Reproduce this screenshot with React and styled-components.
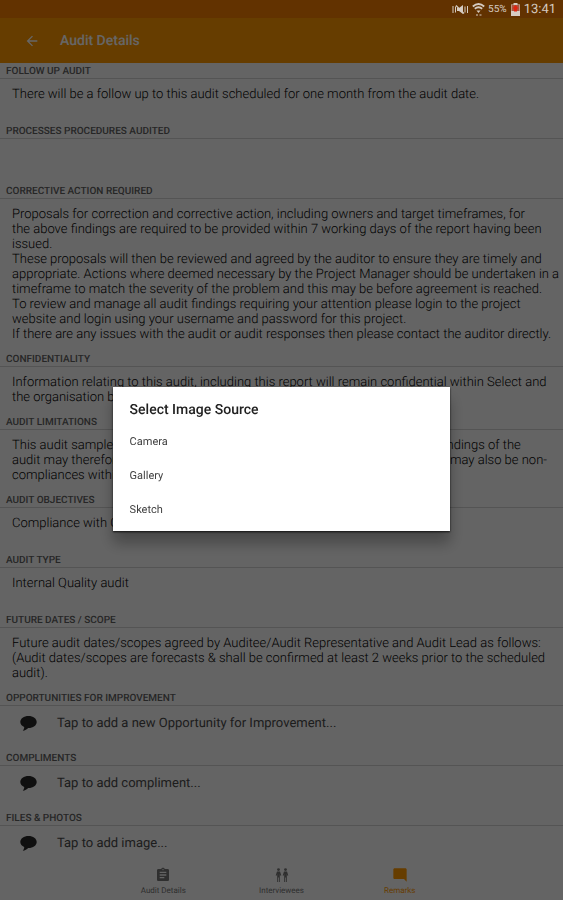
import { useState } from "react";
import styled, { createGlobalStyle } from "styled-components";
import {
  MdArrowBack,
  MdAssignment,
  MdModeComment,
} from "react-icons/md";

const GlobalStyle = createGlobalStyle`
  * {
    box-sizing: border-box;
  }
  body {
    margin: 0;
    font-family: Roboto, "Liberation Sans", sans-serif;
    text-rendering: geometricPrecision;
    background-color: #fafafa;
  }
  button {
    font-family: inherit;
    text-rendering: inherit;
    border: none;
    background: none;
    padding: 0;
    cursor: pointer;
  }
`;

const AppScreen = styled.div`
  display: flex;
  flex-direction: column;
  height: 100vh;
  overflow: hidden;
`;

const StatusBar = styled.div`
  position: relative;
  z-index: 3;
  display: flex;
  flex: none;
  align-items: center;
  justify-content: flex-end;
  gap: 3px;
  height: 18px;
  padding: 0 7px;
  background-color: #623200;
  color: #d6ccc2;
  font-size: 10px;
  .clock {
    font-size: 13px;
  }
  svg {
    display: block;
  }
`;

const AppHeader = styled.header`
  display: flex;
  flex: none;
  align-items: center;
  gap: 20px;
  height: 45px;
  padding: 0 24px;
  background-color: #ff9800;
  color: #ffffff;
  h1 {
    margin: 0;
    font-size: 14px;
    font-weight: 500;
  }
  button {
    display: flex;
    color: inherit;
  }
`;

const AppMain = styled.main`
  flex: 1;
  min-height: 0;
  overflow: hidden;
`;

const Section = styled.section`
  display: flex;
  flex-direction: column;
  min-height: 60px;
`;

const SectionTitle = styled.h2`
  margin: 0;
  padding: 2px 6px 0;
  border-bottom: 1px solid #d2d2d2;
  color: #606060;
  font-size: 10px;
  font-weight: 500;
  line-height: 13px;
  text-transform: uppercase;
`;

const SectionText = styled.p`
  margin: 0;
  padding: 8px 0 9px 12px;
  color: #000000;
  font-size: 13px;
  font-weight: 300;
  line-height: 15px;
  white-space: pre-line;
`;

const AddRow = styled.button`
  display: flex;
  align-items: center;
  gap: 20px;
  padding: 9px 20px;
  color: #4a4a4a;
  font-size: 13px;
  font-weight: 400;
  line-height: 18px;
  text-align: left;
`;

const BottomNav = styled.nav`
  display: flex;
  flex: none;
  justify-content: center;
  height: 37px;
  background-color: #fafafa;
`;

const NavItem = styled.button`
  display: flex;
  flex-direction: column;
  align-items: center;
  gap: 3px;
  width: 21%;
  padding-top: 4px;
  color: ${({ $active }) => ($active ? "#ff9800" : "#757575")};
  font-size: 8px;
  line-height: 10px;
`;

const Scrim = styled.div`
  position: fixed;
  inset: 0;
  z-index: 2;
  display: flex;
  align-items: center;
  justify-content: center;
  padding-top: 18px;
  background-color: rgba(0, 0, 0, 0.6);
`;

const Dialog = styled.div`
  width: 60%;
  padding: 15px 0 4px;
  background-color: #ffffff;
  box-shadow: 0 1px 2px rgba(0, 0, 0, 0.8), 0 12px 14px rgba(0, 0, 0, 0.3);
  h2 {
    margin: 0 0 6px;
    padding: 0 17px;
    color: #212121;
    font-size: 14px;
    font-weight: 500;
    line-height: 17px;
  }
`;

const DialogOption = styled.button`
  display: block;
  width: 100%;
  padding: 0 17px;
  color: #424242;
  font-size: 11px;
  line-height: 34px;
  text-align: left;
`;

const sections = [
  {
    title: "Follow up audit",
    text: "There will be a follow up to this audit scheduled for one month from the audit date.",
  },
  { title: "Processes procedures audited", text: "" },
  {
    title: "Corrective action required",
    text: `Proposals for correction and corrective action, including owners and target timeframes, for
      the above findings are required to be provided within 7 working days of the report having been
      issued.
      These proposals will then be reviewed and agreed by the auditor to ensure they are timely and
      appropriate. Actions where deemed necessary by the Project Manager should be undertaken in a
      timeframe to match the severity of the problem and this may be before agreement is reached.
      To review and manage all audit findings requiring your attention please login to the project
      website and login using your username and password for this project.
      If there are any issues with the audit or audit responses then please contact the auditor directly.`,
  },
  {
    title: "Confidentiality",
    text: `Information relating to this audit, including this report will remain confidential within Select and
      the organisation being audited.`,
  },
  {
    title: "Audit limitations",
    text: `This audit sampled a selection of the activities and records only, and so the findings of the
      audit may therefore not be a full account of all of the issues presented. There may also be non-
      compliances within areas not sampled.`,
  },
  { title: "Audit objectives", text: "Compliance with Quality procedures" },
  { title: "Audit type", text: "Internal Quality audit" },
  {
    title: "Future dates / scope",
    text: `Future audit dates/scopes agreed by Auditee/Audit Representative and Audit Lead as follows:
      (Audit dates/scopes are forecasts & shall be confirmed at least 2 weeks prior to the scheduled
      audit).`,
  },
];

const addSections = [
  {
    title: "Opportunities for improvement",
    text: "Tap to add a new Opportunity for Improvement...",
  },
  { title: "Compliments", text: "Tap to add compliment..." },
  { title: "Files & photos", text: "Tap to add image..." },
];

const CommentIcon = () => (
  <svg width="17" height="16" viewBox="0 0 17 16" aria-hidden="true">
    <path
      d="M8.500 0C3.900 0 .3 2.600.3 6c0 2.200 1.500 4 3.900 5 .1 1.500-.5 2.800-1.500 3.700 2.300-.2 4.200-1.300 5.400-2.700h.4c4.600 0 8.200-2.600 8.200-6S13.100 0 8.500 0z"
      fill="#2a2a2a"
    />
  </svg>
);

const PeopleIcon = () => (
  <svg width="14" height="16" viewBox="0 0 14 16" fill="currentColor" aria-hidden="true">
    <circle cx="3.500" cy="2.600" r="1.400" />
    <path d="M2 4.500h3l1.300 4-.9.300L4.800 7v8h-.9v-4.500h-.8V15h-.9V7l-.6 1.800-.9-.3z" />
    <circle cx="10.500" cy="2.600" r="1.400" />
    <path d="M9 4.500h3l1.300 4-.9.300-.6-1.800v8h-.9v-4.500h-.8V15h-.9V7l-.6 1.800-.9-.3z" />
  </svg>
);

const MutedIcon = () => (
  <svg width="17" height="11" viewBox="0 0 17 11" fill="none" stroke="currentColor" aria-hidden="true">
    <path d="M1 2v7M3.500 2.500v6M13 2.500v6M15.500 2v7" />
    <path d="M5 4h2l4-3v9L7 7H5z" fill="currentColor" stroke="none" />
    <path d="M4 1.500l8 8" strokeWidth="1.200" />
  </svg>
);

const WifiIcon = () => (
  <svg width="13" height="13" viewBox="0 0 13 13" fill="none" stroke="currentColor" aria-hidden="true">
    <path d="M.8 3.500c3.500-3 7.900-3 11.400 0M2.800 5.800c2.300-1.900 5.100-1.900 7.400 0" strokeWidth="1.800" />
    <path d="M4.500 7.500h4l-2 2.500z" fill="currentColor" stroke="none" />
    <path d="M4 12h2M7.500 12h2" />
  </svg>
);

const BatteryIcon = () => (
  <svg width="11" height="13" viewBox="0 0 11 13" aria-hidden="true">
    <path d="M3.500 0h4v1.500H10V13H1V1.500h2.500z" fill="#d6ccc2" />
    <path d="M1.500 2h8v6h-8z" fill="#a9553f" />
    <path d="M5.500 2l3 3.500H7v3H4v-3H2.500z" fill="#e02410" />
  </svg>
);

const navItems = [
  { title: "Audit Details", icon: <MdAssignment size={16} /> },
  { title: "Interviewees", icon: <PeopleIcon /> },
  { title: "Remarks", icon: <MdModeComment size={16} /> },
];

const AuditDetails = () => {
  const [active, setActive] = useState("Remarks");
  const [modal, setModal] = useState(true);
  const toggleModal = () => setModal(!modal);

  return (
    <AppScreen>
      <GlobalStyle />
      <StatusBar>
        <MutedIcon />
        <WifiIcon />
        <span>55%</span>
        <BatteryIcon />
        <span className="clock">13:41</span>
      </StatusBar>
      <AppHeader>
        <button type="button" aria-label="Back">
          <MdArrowBack size={16} />
        </button>
        <h1>Audit Details</h1>
      </AppHeader>
      <AppMain>
        {sections.map((item) => (
          <Section key={item.title}>
            <SectionTitle>{item.title}</SectionTitle>
            <SectionText>{item.text}</SectionText>
          </Section>
        ))}
        {addSections.map((item) => (
          <Section key={item.title}>
            <SectionTitle>{item.title}</SectionTitle>
            <AddRow type="button" onClick={toggleModal}>
              <CommentIcon />
              {item.text}
            </AddRow>
          </Section>
        ))}
      </AppMain>
      <BottomNav>
        {navItems.map((item) => (
          <NavItem
            type="button"
            key={item.title}
            $active={active === item.title}
            onClick={() => setActive(item.title)}
          >
            {item.icon}
            {item.title}
          </NavItem>
        ))}
      </BottomNav>
      {modal ? (
        <Scrim onClick={toggleModal}>
          <Dialog role="dialog" aria-labelledby="source-title">
            <h2 id="source-title">Select Image Source</h2>
            <DialogOption type="button">Camera</DialogOption>
            <DialogOption type="button">Gallery</DialogOption>
            <DialogOption type="button">Sketch</DialogOption>
          </Dialog>
        </Scrim>
      ) : null}
    </AppScreen>
  );
};

export default AuditDetails;
